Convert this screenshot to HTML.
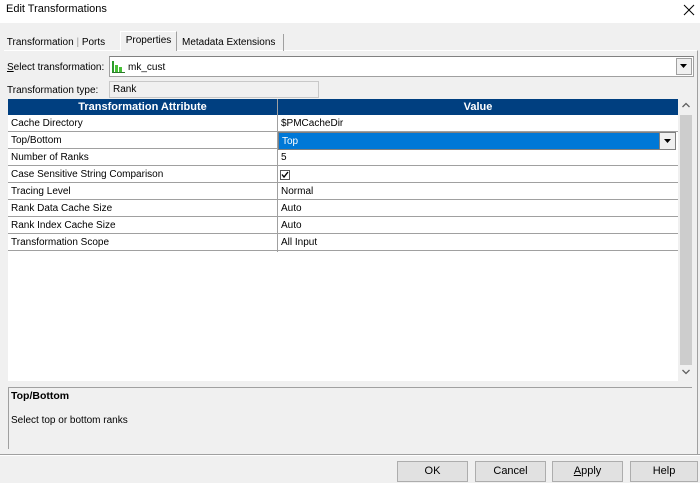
<!DOCTYPE html>
<html><head><meta charset="utf-8"><style>
*{box-sizing:border-box;margin:0;padding:0}
body{width:700px;height:483px;background:#f0f0f0;font-family:"Liberation Sans",sans-serif;font-size:10px;color:#000;position:relative;overflow:hidden}
.a{position:absolute;white-space:nowrap}
.title{left:0;top:0;width:700px;height:23px;background:#fff}
.cell{position:absolute;height:17px;line-height:15px;padding-top:1px;padding-left:3px;border-bottom:1px solid #a0a0a0;white-space:nowrap}
.btn{position:absolute;top:461px;height:21px;border:1px solid #adadad;background:#e1e1e1;text-align:center;line-height:19px;font-size:11px}
</style></head><body>
<div class="a title"></div>
<div class="a" style="left:6px;top:3px;font-size:11px">Edit Transformations</div>
<svg class="a" style="left:683px;top:4px" width="12" height="12"><path d="M1 1L11 11M11 1L1 11" stroke="#000" stroke-width="1"/></svg>
<div class="a" style="left:4px;top:50px;width:694px;height:404px;border-top:1px solid #fff;border-right:1px solid #a0a0a0"></div>
<div class="a" style="left:4px;top:34px;height:17px;width:116px;line-height:17px">&nbsp;Transformation <span style="color:#999">|</span> Ports</div>
<div class="a" style="left:120px;top:31px;width:57px;height:20px;background:#f0f0f0;border:1px solid #fff;border-bottom:none;border-right-color:#a0a0a0;line-height:17px;text-align:center">Properties</div>
<div class="a" style="left:178px;top:34px;width:106px;height:17px;line-height:17px;border-right:1px solid #a0a0a0;padding-left:4px">Metadata Extensions</div>
<div class="a" style="left:7px;top:62px"><u>S</u>elect transformation:</div>
<div class="a" style="left:109px;top:56px;width:585px;height:21px;background:#fff;border:1px solid #a0a0a0;border-top-color:#808080"></div>
<svg class="a" style="left:112px;top:61px" width="13" height="12"><rect x="0" y="0" width="2" height="12" fill="#2a9a2a"/><rect x="3" y="4" width="3" height="8" fill="#48c038"/><rect x="7" y="6" width="3" height="6" fill="#48c038"/><rect x="0" y="11" width="13" height="1" fill="#2a7a2a"/></svg>
<div class="a" style="left:128px;top:62px">mk_cust</div>
<div class="a" style="left:676px;top:58px;width:16px;height:17px;background:#f0f0f0;border:1px solid #a0a0a0"></div>
<svg class="a" style="left:680px;top:64px" width="8" height="5"><path d="M0 0H7L3.5 4Z" fill="#000"/></svg>
<div class="a" style="left:7px;top:85px">Transformation type:</div>
<div class="a" style="left:109px;top:81px;width:210px;height:17px;border:1px solid #c8c8c8;background:#f0f0f0;padding-left:3px;line-height:15px">Rank</div>
<div class="a" style="left:8px;top:99px;width:670px;height:282px;background:#fff"></div>
<div class="a" style="left:8px;top:99px;width:670px;height:16px;background:#003f80;color:#fff;font-weight:bold;line-height:16px;font-size:11px">
<div class="a" style="left:0;width:269px;text-align:center">Transformation Attribute</div>
<div class="a" style="left:270px;width:400px;text-align:center">Value</div></div>
<div class="a" style="left:277px;top:99px;width:1px;height:153px;background:#a0a0a0"></div>
<div class="a" style="left:8px;top:115px">
<div class="cell" style="top:0;left:0;width:270px">Cache Directory</div><div class="cell" style="top:0;left:270px;width:400px">$PMCacheDir</div>
<div class="cell" style="top:17px;left:0;width:270px">Top/Bottom</div><div class="cell" style="top:17px;left:270px;width:400px;border:none"></div>
<div class="cell" style="top:34px;left:0;width:270px">Number of Ranks</div><div class="cell" style="top:34px;left:270px;width:400px">5</div>
<div class="cell" style="top:51px;left:0;width:270px">Case Sensitive String Comparison</div><div class="cell" style="top:51px;left:270px;width:400px"></div>
<div class="cell" style="top:68px;left:0;width:270px">Tracing Level</div><div class="cell" style="top:68px;left:270px;width:400px">Normal</div>
<div class="cell" style="top:85px;left:0;width:270px">Rank Data Cache Size</div><div class="cell" style="top:85px;left:270px;width:400px">Auto</div>
<div class="cell" style="top:102px;left:0;width:270px">Rank Index Cache Size</div><div class="cell" style="top:102px;left:270px;width:400px">Auto</div>
<div class="cell" style="top:119px;left:0;width:270px">Transformation Scope</div><div class="cell" style="top:119px;left:270px;width:400px">All Input</div>
</div>
<div class="a" style="left:278px;top:132px;width:398px;height:18px;border:1px solid #808080;background:#0078d7;color:#fff;padding-left:3px;padding-top:1px;line-height:15px">Top</div>
<div class="a" style="left:659px;top:132px;width:17px;height:18px;background:#f0f0f0;border:1px solid #808080"></div>
<svg class="a" style="left:664px;top:139px" width="8" height="5"><path d="M0 0H7L3.5 4Z" fill="#000"/></svg>
<svg class="a" style="left:280px;top:170px" width="10" height="10"><rect x="0.5" y="0.5" width="9" height="9" fill="#fff" stroke="#555"/><path d="M2 4.5L4 7L8 2" stroke="#000" stroke-width="1.4" fill="none"/></svg>
<div class="a" style="left:679px;top:99px;width:14px;height:282px;background:#f0f0f0"></div>
<div class="a" style="left:680px;top:115px;width:12px;height:250px;background:#cdcdcd"></div>
<svg class="a" style="left:682px;top:102px" width="8" height="6"><path d="M0.5 5L4 1.5L7.5 5" stroke="#606060" stroke-width="1.3" fill="none"/></svg>
<svg class="a" style="left:682px;top:369px" width="8" height="6"><path d="M0.5 1L4 4.5L7.5 1" stroke="#606060" stroke-width="1.3" fill="none"/></svg>
<div class="a" style="left:8px;top:387px;width:684px;height:62px;border-top:1px solid #a0a0a0;border-left:1px solid #a0a0a0"></div>
<div class="a" style="left:11px;top:390px;font-weight:bold;font-size:10.5px">Top/Bottom</div>
<div class="a" style="left:11px;top:415px">Select top or bottom ranks</div>
<div class="a" style="left:0;top:454px;width:700px;height:2px;border-top:1px solid #a0a0a0;border-bottom:1px solid #fff"></div>
<div class="btn" style="left:397px;width:71px">OK</div>
<div class="btn" style="left:475px;width:71px">Cancel</div>
<div class="btn" style="left:552px;width:71px"><u>A</u>pply</div>
<div class="btn" style="left:630px;width:68px">Help</div>
</body></html>
